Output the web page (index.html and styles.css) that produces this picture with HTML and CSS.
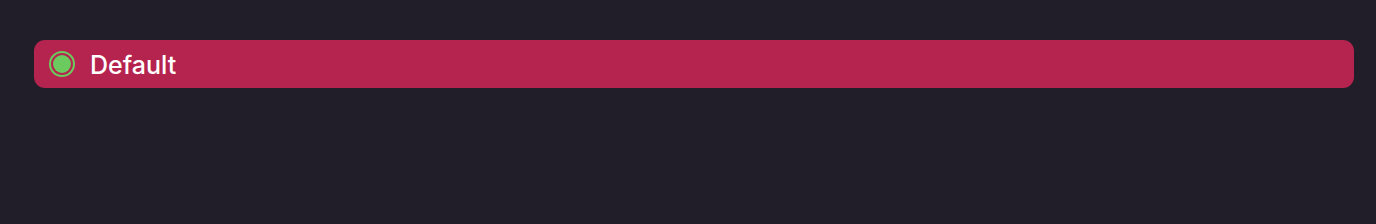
FILE: index.html
```html
<!DOCTYPE html>
<html lang="en">
<head>
    <meta charset="UTF-8">
    <title>Profiles</title>
    <link rel="stylesheet" href="styles.css">
</head>
<body>
    <div class="list">
        <div class="row selected">
            <span class="radio"><span class="dot"></span></span>
            <span class="label">Default</span>
        </div>
    </div>
</body>
</html>
```
FILE: styles.css
```css
* {
    margin: 0;
    padding: 0;
    box-sizing: border-box;
}

body {
    background: #221e29;
    font-family: Inter, "Noto Sans", sans-serif;
    color: #fff;
}

.list {
    padding: 40px 22px 0 34px;
}

.row {
    height: 48px;
    display: flex;
    align-items: center;
    padding-left: 15px;
    border-radius: 11px;
}

.row.selected {
    background: #b5244f;
}

.radio {
    width: 26px;
    height: 26px;
    border-radius: 50%;
    border: 2px solid #6ccb5f;
    display: flex;
    align-items: center;
    justify-content: center;
}

.dot {
    width: 18px;
    height: 18px;
    border-radius: 50%;
    background: #6ccb5f;
}

.label {
    margin-left: 15px;
    padding-top: 1px;
    font-size: 25px;
    font-weight: 500;
}
```
